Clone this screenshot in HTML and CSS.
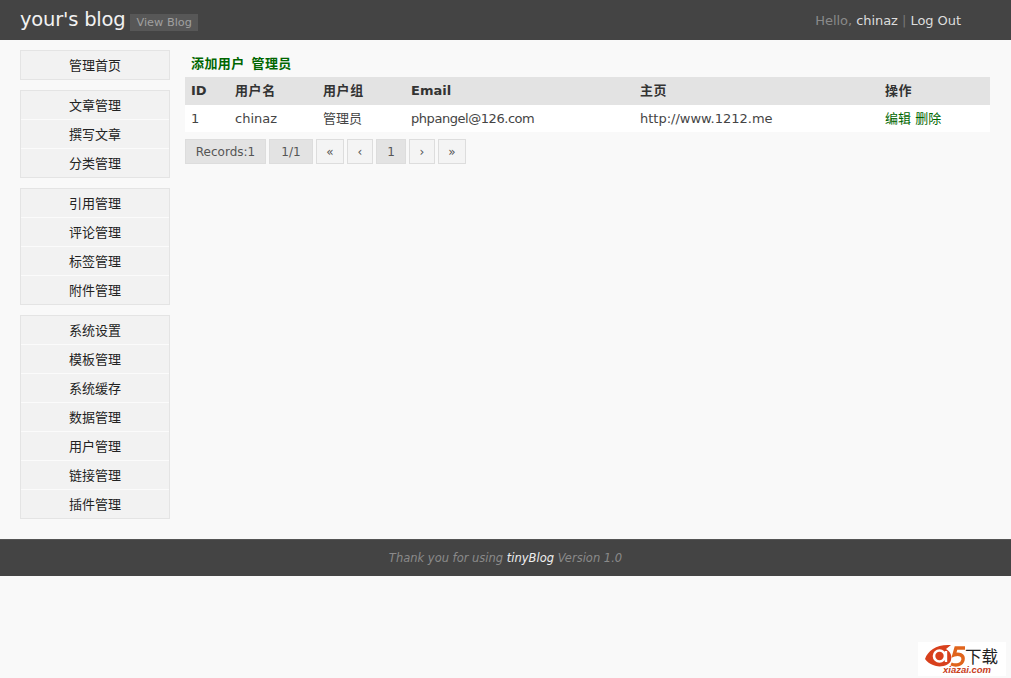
FILE: index.html
```html
<!DOCTYPE html>
<html lang="zh">
<head>
<meta charset="utf-8">
<title>your's blog</title>
<link rel="stylesheet" href="styles.css">
</head>
<body>
<header class="topbar">
  <div class="brand">
    <h1 class="site-name">your's blog</h1>
    <a class="view-blog">View Blog</a>
  </div>
  <div class="user">Hello, <a>chinaz</a> <span class="sep">|</span> <a>Log Out</a></div>
</header>
<div class="wrap">
  <nav class="side">
    <ul class="group"><li>管理首页</li></ul>
    <ul class="group"><li>文章管理</li><li>撰写文章</li><li>分类管理</li></ul>
    <ul class="group"><li>引用管理</li><li>评论管理</li><li>标签管理</li><li>附件管理</li></ul>
    <ul class="group"><li>系统设置</li><li>模板管理</li><li>系统缓存</li><li>数据管理</li><li>用户管理</li><li>链接管理</li><li>插件管理</li></ul>
  </nav>
  <main class="main">
    <h2 class="title">添加用户 管理员</h2>
    <table class="users">
      <thead><tr><th class="c-id">ID</th><th class="c-name">用户名</th><th class="c-group">用户组</th><th class="c-mail">Email</th><th class="c-home">主页</th><th class="c-op">操作</th></tr></thead>
      <tbody><tr><td>1</td><td>chinaz</td><td>管理员</td><td class="mail">phpangel@126.com</td><td>http://www.1212.me</td><td><a>编辑</a> <a>删除</a></td></tr></tbody>
    </table>
    <div class="pager">
      <span class="page solid wide">Records:1</span>
      <span class="page solid mid">1/1</span>
      <span class="page step-outer">«</span>
      <span class="page">‹</span>
      <span class="page solid cur">1</span>
      <span class="page">›</span>
      <span class="page step-outer">»</span>
    </div>
  </main>
</div>
<footer class="foot">Thank you for using <a>tinyBlog</a> Version 1.0</footer>
<div class="stamp">
  <svg class="stamp-icon" width="44" height="28" viewBox="0 0 44 28" aria-hidden="true">
    <path d="M1 17 C4 8 13 2 27 3 L22 7 C27 10 28 14 27 18 C26 24 15 26 9 23 C6 22 3 20 1 17 Z" fill="#d8401c"/>
    <circle cx="15.5" cy="14" r="5.5" fill="none" stroke="#fff" stroke-width="2.6"/>
    <path d="M22 9 V20" stroke="#fff" stroke-width="2.4"/>
    <path d="M41 6 H32 L30 13 C35 11 40 13 39 18 C38 23 32 24 27 22" fill="none" stroke="#e0641c" stroke-width="3.4"/>
  </svg>
  <span class="stamp-cn">下载</span>
  <span class="stamp-en">xiazai.com</span>
</div>
</body>
</html>
```
FILE: styles.css
```css
* { box-sizing: border-box; }
html, body { margin: 0; padding: 0; }
body {
  position: relative;
  height: 678px;
  overflow: hidden;
  background: #f9f9f9;
  color: #444;
  font: 13px/1.4 "DejaVu Sans", "Noto Sans CJK SC", sans-serif;
}
ul { list-style: none; margin: 0; padding: 0; }
.topbar {
  height: 40px;
  background: #444;
  display: flex;
  justify-content: space-between;
  align-items: center;
  padding: 0 50px 0 20px;
}
.brand { display: flex; align-items: center; gap: 5px; }
.site-name {
  margin: 0;
  font-size: 19.5px;
  font-weight: normal;
  color: #f2f2f2;
  line-height: 40px;
  letter-spacing: -0.2px;
}
.view-blog {
  background: #575757;
  color: #a0a0a0;
  font-size: 11.3px;
  line-height: 17px;
  padding: 0 6px;
  margin-top: 5px;
}
.user {
  color: #8a8a8a;
  padding-top: 2px;
  letter-spacing: -0.05px;
}
.user a { color: #ddd; }
.sep { color: #777; }
.wrap {
  display: flex;
  height: 499px;
  padding: 10px 21px 0 20px;
  gap: 15px;
}
.side { width: 150px; flex: none; display: flex; flex-direction: column; gap: 10px; }
.group {
  background: #f2f2f2;
  border: 1px solid #e4e4e4;
}
.group li {
  height: 29px;
  line-height: 30px;
  text-align: center;
  color: #222;
  border-top: 1px solid #fbfbfb;
}
.group li:first-child { height: 28px; line-height: 28px; padding-top: 1px; border-top: 0; }
.main { flex: 1; min-width: 0; }
.title {
  margin: 0;
  height: 27px;
  padding: 5px 6px 0;
  font-size: 13px;
  line-height: 18px;
  font-weight: bold;
  color: #060;
  letter-spacing: 0.4px;
  word-spacing: 2px;
}
.users { width: 805px; border-collapse: collapse; table-layout: fixed; }
.users th {
  background: #e3e3e3;
  height: 28px;
  padding: 0 5px 0 6px;
  text-align: left;
  color: #333;
  font-weight: bold;
}
.users td {
  background: #fff;
  height: 27px;
  padding: 2px 5px 0 6px;
  color: #444;
}
.users .mail { letter-spacing: -0.45px; }
.users a { color: #060; }
.c-id { width: 44px; }
.c-name, .c-group { width: 88px; letter-spacing: 0.6px; }
.c-mail { width: 229px; }
.c-home { width: 245px; letter-spacing: 0.5px; }
.c-op { letter-spacing: 0.5px; }
.pager { display: flex; gap: 3px; margin-top: 7px; }
.page {
  width: 26px;
  height: 25px;
  line-height: 24px;
  text-align: center;
  font-size: 12px;
  color: #555;
  background: #f4f4f4;
  border: 1px solid #ddd;
}
.solid { background: #e3e3e3; }
.wide { width: 81px; }
.mid { width: 44px; }
.cur { width: 30px; }
.step-outer { width: 28px; }
.foot {
  height: 37px;
  line-height: 37px;
  text-align: center;
  background: #444;
  border-top: 1px solid #555;
  font-size: 11.5px;
  font-style: italic;
  color: #8a8a8a;
}
.foot a { color: #eee; }
.stamp {
  position: absolute;
  right: 5px;
  bottom: 2px;
  width: 88px;
  height: 34px;
  background: #fff;
}
.stamp-icon { position: absolute; left: 6px; top: 0; }
.stamp-cn {
  position: absolute;
  left: 47px;
  top: 6px;
  font: 16.5px/16px "Noto Sans CJK SC", sans-serif;
  color: #222;
}
.stamp-en {
  position: absolute;
  left: 25px;
  top: 23px;
  font: italic bold 9.5px/10px "Liberation Sans", sans-serif;
  color: #c8401c;
}
```
